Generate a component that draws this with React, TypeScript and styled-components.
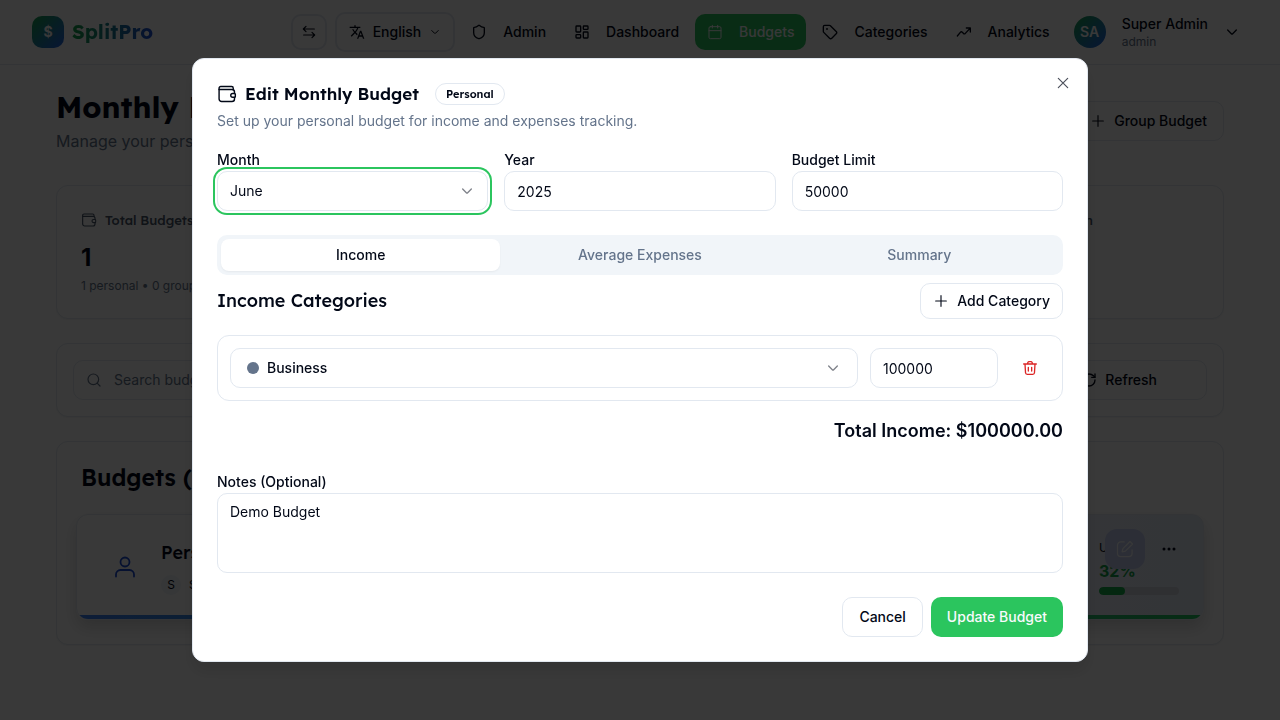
import React from "react";
import styled, { createGlobalStyle, css } from "styled-components";
import { Calendar, LayoutDashboard, RefreshCw, Search, Shield, Tag } from "lucide-react";
import { MdTranslate } from "react-icons/md";

const ink = "#020817";
const muted = "#64748b";
const line = "#e2e8f0";
const green = "#2bc55e";
const body = `Inter, "Liberation Sans", sans-serif`;
const display = `Lexend, Inter, "Liberation Sans", sans-serif`;

const GlobalStyle = createGlobalStyle`
  *, *::before, *::after { box-sizing: border-box; }
  body {
    margin: 0;
    background: #fff;
    color: ${ink};
    font-family: ${body};
    font-size: 14px;
    line-height: 20px;
    overflow: hidden;
  }
  h1, h2, h3, p { margin: 0; }
  button, input, select, textarea { font: inherit; color: inherit; }
  button { cursor: pointer; }
  a { color: inherit; text-decoration: none; }
  svg { display: block; flex: none; }
`;

/* ---------- icons ---------- */

const Icon = ({ size = 16, children, width = 1.5 }: { size?: number; width?: number; children: React.ReactNode }) => (
  <svg
    width={size}
    height={size}
    viewBox="0 0 24 24"
    fill="none"
    stroke="currentColor"
    strokeWidth={width}
    strokeLinecap="round"
    strokeLinejoin="round"
    aria-hidden="true"
  >
    {children}
  </svg>
);

const WalletIcon = ({ size }: { size: number }) => (
  <Icon size={size} width={1.7}>
    <path d="M2.5 6.5V5a2 2 0 0 1 2-2h13a2 2 0 0 1 2 2v1.8" />
    <path d="M2.5 6.5H18a3 3 0 0 1 3 3v1.8M21 16v2a3 3 0 0 1-3 3H5.5a3 3 0 0 1-3-3V6.5" />
    <path d="M21 11.3h-2.2a2.3 2.3 0 0 0 0 4.6H21c.6 0 1-.4 1-1v-2.6c0-.6-.4-1-1-1z" />
  </Icon>
);

const SwapIcon = () => (
  <Icon width={1.8}>
    <path d="M20 7.5H3.5M7.5 3.5l-4 4 4 4M4 16.5h16.5M16.5 12.5l4 4-4 4" />
  </Icon>
);

const ChevronIcon = ({ size = 16 }: { size?: number }) => (
  <Icon size={size} width={2}>
    <path d="M18.500 9l-5.500 5.500q-1 1-2 0L5.500 9" />
  </Icon>
);

const PlusIcon = () => (
  <Icon width={1.7}>
    <path d="M12 4v16M4 12h16" />
  </Icon>
);

const CloseIcon = () => (
  <Icon width={1.8}>
    <path d="M5 5l14 14M19 5L5 19" />
  </Icon>
);

const TrendIcon = () => (
  <Icon width={2}>
    <path d="M2 18l4.500-5.500c1-1.200 2-1.200 3 0l1.500 1.500c1 1.200 2 1.200 3 0L21 6.500M15.500 6H21.500v6" />
  </Icon>
);

const TrashIcon = () => (
  <Icon width={2}>
    <path d="M4.500 6l.8 13.200A2.500 2.500 0 0 0 7.800 21.500h8.400a2.500 2.500 0 0 0 2.500-2.300L19.500 6M2.500 6h19M8 6l1-2.500c.3-.7.8-1 1.500-1h3c.7 0 1.200.3 1.500 1L16 6M9.500 11v5.500M14.500 11v5.500" />
  </Icon>
);

const UserIcon = () => (
  <Icon size={24} width={1.8}>
    <circle cx="12" cy="7" r="4.500" />
    <path d="M3 21.500v-2a4.500 4.500 0 0 1 4.500-4.500h9a4.500 4.500 0 0 1 4.500 4.500v2" />
  </Icon>
);

const EditIcon = () => (
  <Icon size={20}>
    <path d="M11 3.500H7a4 4 0 0 0-4 4V17a4 4 0 0 0 4 4h9.500a4 4 0 0 0 4-4v-4" />
    <path d="M18 3l3 3-8.500 8.500L8.500 15.500l1-4z" />
  </Icon>
);

/* ---------- page header ---------- */

const Header = styled.header`
  display: flex;
  align-items: center;
  justify-content: space-between;
  height: 65px;
  padding: 0 32px;
  border-bottom: 1px solid ${line};
`;

const Brand = styled.a`
  display: flex;
  align-items: center;
  gap: 8px;
`;

const BrandMark = styled.span`
  display: grid;
  place-items: center;
  width: 32px;
  height: 32px;
  border-radius: 10px;
  background: linear-gradient(135deg, #16a34a, #2563eb);
  color: #fff;
  font-weight: 700;
`;

const BrandName = styled.span`
  font: 700 20px/28px ${display};
  background: linear-gradient(90deg, #16a34a, #1d4ed8);
  background-clip: text;
  color: transparent;
`;

const Nav = styled.nav`
  display: flex;
  align-items: center;
  gap: 4px;
`;

const SwapButton = styled.button`
  display: grid;
  place-items: center;
  width: 36px;
  height: 36px;
  margin-right: 4px;
  padding: 0;
  border: 2px solid ${line};
  border-radius: 10px;
  background: #fff;
`;

const LanguageButton = styled.button`
  display: flex;
  align-items: center;
  gap: 8px;
  height: 40px;
  padding: 0 12px;
  border: 2px solid ${line};
  border-radius: 10px;
  background: #fff;
  font-weight: 500;
`;

const NavLink = styled.a<{ $active?: boolean }>`
  display: flex;
  align-items: center;
  gap: 16px;
  height: 36px;
  padding: 0 12px;
  border-radius: 10px;
  font-weight: 500;
  ${(p) => p.$active && css`background: ${green}; color: #f8fafc;`}
`;

const Account = styled.button`
  display: flex;
  align-items: center;
  gap: 16px;
  padding: 0 8px;
  border: 0;
  background: none;
  text-align: left;
`;

const Avatar = styled.span`
  display: grid;
  place-items: center;
  width: 32px;
  height: 32px;
  border-radius: 50%;
  background: linear-gradient(135deg, #16a34a, #2563eb);
  color: #fff;
  font-weight: 600;
`;

const AccountText = styled.span`
  display: grid;
  font-weight: 500;
`;

const Role = styled.span`
  color: ${muted};
  font-size: 12px;
  font-weight: 400;
  line-height: 16px;
`;

/* ---------- page ---------- */

const Main = styled.main`
  display: grid;
  gap: 24px;
  padding: 24px 56px;
`;

const PageHead = styled.div`
  display: flex;
  align-items: center;
  justify-content: space-between;
  height: 64px;
  margin-bottom: 8px;
`;

const PageTitle = styled.h1`
  font: 700 30px/36px ${display};
`;

const PageText = styled.p`
  color: ${muted};
  font-size: 16px;
  line-height: 24px;
  margin-top: 4px;
`;

const Button = styled.button<{ $primary?: boolean; $small?: boolean }>`
  display: inline-flex;
  align-items: center;
  justify-content: center;
  gap: 8px;
  height: ${(p) => (p.$small ? 36 : 40)}px;
  padding: 0 ${(p) => (p.$small ? 12 : 16)}px;
  border: ${(p) => (p.$primary ? "0" : `1px solid ${line}`)};
  border-radius: 10px;
  background: ${(p) => (p.$primary ? green : "#fff")};
  color: ${(p) => (p.$primary ? "#f8fafc" : ink)};
  font-weight: 500;
`;

const Card = styled.section`
  border: 1px solid ${line};
  border-radius: 12px;
  background: #fff;
  box-shadow: 0 1px 2px rgba(0, 0, 0, 0.05);
`;

const Stats = styled.div`
  display: grid;
  grid-template-columns: repeat(4, 1fr);
  gap: 24px;
`;

const Stat = styled(Card)`
  height: 134px;
  padding: 24px;
`;

const StatTitle = styled.h3`
  display: flex;
  align-items: center;
  gap: 8px;
  color: #475569;
  font: 500 13px/20px ${display};
`;

const StatValue = styled.p`
  margin-top: 12px;
  font-size: 24px;
  font-weight: 700;
  line-height: 32px;
`;

const StatNote = styled.p`
  margin-top: 4px;
  color: ${muted};
  font-size: 12px;
  line-height: 16px;
`;

const Filters = styled(Card)`
  display: grid;
  grid-template-columns: repeat(6, 1fr);
  gap: 16px;
  padding: 16px;
`;

const SearchBox = styled.label`
  grid-column: span 5;
  display: flex;
  align-items: center;
  gap: 12px;
  height: 40px;
  padding: 0 12px;
  border: 1px solid ${line};
  border-radius: 10px;
  color: ${muted};
`;

const SearchInput = styled.input`
  flex: 1;
  padding: 0;
  border: 0;
  background: none;
  outline: 0;
  &::placeholder { color: ${muted}; opacity: 1; }
`;

const BudgetList = styled(Card)`
  padding: 20px 19px 24px;
`;

const ListTitle = styled.h2`
  padding-left: 5px;
  font: 600 23px/32px ${display};
`;

const RowShadow = styled.div`
  margin-top: 20px;
  border-radius: 12px;
  box-shadow: 0 8px 16px rgba(0, 0, 0, 0.15);
`;

const BudgetRow = styled.article`
  position: relative;
  display: flex;
  align-items: center;
  justify-content: space-between;
  height: 106px;
  padding: 0 24px 0 36px;
  border: 1px solid ${line};
  border-radius: 12px;
  overflow: hidden;
  background: linear-gradient(90deg, #fff, #e4ebf7);
  &::after {
    content: "";
    position: absolute;
    inset: auto 0 0;
    height: 4px;
    background: linear-gradient(90deg, #3b82f6, #22c55e);
  }
`;

const Owner = styled.div`
  display: flex;
  align-items: center;
  gap: 24px;
  color: #1d4ed8;
`;

const OwnerText = styled.div`
  display: grid;
  gap: 8px;
  color: ${ink};
`;

const OwnerName = styled.h3`
  font: 500 18px/28px ${display};
`;

const Member = styled.p`
  display: flex;
  align-items: center;
  gap: 8px;
  font-size: 12px;
`;

const MemberMark = styled.span`
  display: grid;
  place-items: center;
  width: 20px;
  height: 20px;
  border-radius: 50%;
  background: #f1f5f9;
`;

const Usage = styled.div`
  display: grid;
  width: 80px;
  padding-bottom: 1px;
  font-size: 12px;
`;

const Percent = styled.strong`
  color: #16a34a;
  font-size: 16px;
  line-height: 26px;
`;

const Meter = styled.span`
  height: 8px;
  margin-top: 3px;
  border-radius: 4px;
  background: #d3d7de;
  overflow: hidden;
`;

const MeterFill = styled.span`
  display: block;
  width: 33%;
  height: 100%;
  border-radius: 4px;
  background: #16b04a;
`;

const RowActions = styled.div`
  position: absolute;
  top: 14px;
  right: 14px;
  display: flex;
  gap: 4px;
`;

const RowAction = styled.button<{ $tinted?: boolean }>`
  display: grid;
  place-items: center;
  width: 40px;
  height: 40px;
  padding: 0;
  border: 0;
  border-radius: 12px;
  background: ${(p) => (p.$tinted ? "#c3cdf0" : "none")};
  color: ${(p) => (p.$tinted ? "#f8fafc" : ink)};
`;

/* ---------- dialog ---------- */

const Overlay = styled.div`
  position: fixed;
  inset: 0;
  display: grid;
  place-items: center;
  background: rgba(0, 0, 0, 0.775);
`;

const Dialog = styled.div`
  position: relative;
  width: 70%;
  min-width: 640px;
  padding: 24px;
  border: 1px solid ${line};
  border-radius: 12px;
  background: #fff;
  box-shadow: 0 10px 15px rgba(0, 0, 0, 0.1);
`;

const Close = styled.button`
  position: absolute;
  top: 16px;
  right: 16px;
  padding: 0;
  border: 0;
  background: none;
  opacity: 0.7;
`;

const DialogTitle = styled.h2`
  display: flex;
  align-items: center;
  gap: 8px;
  height: 22px;
  font: 600 17px/22px ${display};
`;

const Badge = styled.span`
  margin-left: 8px;
  padding: 0 10px;
  border: 1px solid ${line};
  border-radius: 11px;
  font-size: 11px;
  line-height: 20px;
`;

const Description = styled.p`
  margin: 6px 0 16px;
  color: ${muted};
`;

const Fields = styled.div`
  display: grid;
  grid-template-columns: repeat(3, 1fr);
  gap: 16px;
  margin-bottom: 24px;
`;

const Label = styled.label`
  display: block;
  padding-top: 2px;
  font-weight: 500;
  line-height: 22px;
`;

const control = css`
  display: block;
  width: 100%;
  height: 40px;
  padding: 0 12px;
  border: 1px solid ${line};
  border-radius: 10px;
  background: #fff;
  outline: 0;
`;

const Input = styled.input`
  ${control}
`;

const SelectWrap = styled.div`
  position: relative;
  flex: 1;
`;

const Select = styled.select<{ $ring?: boolean; $dotted?: boolean }>`
  ${control}
  appearance: none;
  ${(p) => p.$ring && css`box-shadow: 0 0 0 2px #fff, 0 0 0 4px ${green};`}
  ${(p) => p.$dotted && css`padding-left: 36px; font-weight: 500;`}
`;

const Chevron = styled.span<{ $inset?: boolean }>`
  position: absolute;
  top: 12px;
  right: ${(p) => (p.$inset ? 17 : 13)}px;
  opacity: 0.5;
  pointer-events: none;
`;

const Dot = styled.span`
  position: absolute;
  top: 14px;
  left: 17px;
  width: 12px;
  height: 12px;
  border-radius: 50%;
  background: ${muted};
`;

const Tabs = styled.div`
  display: grid;
  grid-template-columns: repeat(3, 1fr);
  padding: 4px;
  border-radius: 10px;
  background: #f1f5f9;
`;

const Tab = styled.button<{ $active?: boolean }>`
  height: 32px;
  border: 0;
  border-radius: 8px;
  background: ${(p) => (p.$active ? "#fff" : "none")};
  box-shadow: ${(p) => (p.$active ? "0 1px 2px rgba(0, 0, 0, 0.05)" : "none")};
  color: ${(p) => (p.$active ? ink : muted)};
  font-weight: 500;
`;

const SectionHead = styled.div`
  display: flex;
  align-items: center;
  justify-content: space-between;
  margin: 8px 0 16px;
`;

const SectionTitle = styled.h3`
  font: 500 18px/28px ${display};
`;

const CategoryRow = styled.div`
  display: flex;
  gap: 12px;
  padding: 12px;
  border: 1px solid ${line};
  border-radius: 12px;
`;

const Amount = styled(Input)`
  width: 128px;
`;

const Delete = styled.button`
  display: grid;
  place-items: center;
  width: 40px;
  height: 40px;
  padding: 0;
  border: 0;
  background: none;
  color: #dc2626;
`;

const Total = styled.p`
  margin: 16px 0 24px;
  font-size: 18px;
  font-weight: 600;
  line-height: 28px;
  text-align: right;
`;

const Notes = styled.textarea`
  ${control}
  height: 80px;
  padding: 8px 12px;
  resize: none;
`;

const Footer = styled.div`
  display: flex;
  justify-content: flex-end;
  gap: 8px;
  margin-top: 24px;
`;

export default function App() {
  return (
    <>
      <GlobalStyle />
      <Header>
        <Brand href="#">
          <BrandMark>$</BrandMark>
          <BrandName>SplitPro</BrandName>
        </Brand>
        <Nav>
          <SwapButton aria-label="Switch direction"><SwapIcon /></SwapButton>
          <LanguageButton>
            <MdTranslate size={16} />
            English
            <ChevronIcon size={12} />
          </LanguageButton>
          <NavLink href="#"><Shield size={16} strokeWidth={2} />Admin</NavLink>
          <NavLink href="#"><LayoutDashboard size={16} strokeWidth={2} />Dashboard</NavLink>
          <NavLink href="#" $active><Calendar size={16} strokeWidth={1.5} />Budgets</NavLink>
          <NavLink href="#"><Tag size={16} strokeWidth={2} />Categories</NavLink>
          <NavLink href="#"><TrendIcon />Analytics</NavLink>
          <Account>
            <Avatar>SA</Avatar>
            <AccountText>Super Admin<Role>admin</Role></AccountText>
            <ChevronIcon />
          </Account>
        </Nav>
      </Header>

      <Main>
        <PageHead>
          <div>
            <PageTitle>Monthly Budgets</PageTitle>
            <PageText>Manage your personal and group budgets</PageText>
          </div>
          <Button><PlusIcon />Group Budget</Button>
        </PageHead>

        <Stats>
          <Stat>
            <StatTitle><WalletIcon size={16} />Total Budgets</StatTitle>
            <StatValue>1</StatValue>
            <StatNote>1 personal • 0 group</StatNote>
          </Stat>
          <Stat />
          <Stat />
          <Stat>
            <StatTitle><WalletIcon size={16} />Avg Utilization</StatTitle>
          </Stat>
        </Stats>

        <Filters>
          <SearchBox>
            <Search size={16} strokeWidth={1.8} />
            <SearchInput placeholder="Search budgets..." aria-label="Search budgets" />
          </SearchBox>
          <Button><RefreshCw size={16} strokeWidth={2} />Refresh</Button>
        </Filters>

        <BudgetList>
          <ListTitle>Budgets (1)</ListTitle>
          <RowShadow>
            <BudgetRow>
              <Owner>
                <UserIcon />
                <OwnerText>
                  <OwnerName>Personal Budget</OwnerName>
                  <Member><MemberMark>S</MemberMark>Super Admin</Member>
                </OwnerText>
              </Owner>
              <Usage>
                <span>Used</span>
                <Percent>32%</Percent>
                <Meter><MeterFill /></Meter>
              </Usage>
              <RowActions>
                <RowAction $tinted aria-label="Edit"><EditIcon /></RowAction>
                <RowAction aria-label="More">
                  <svg width="16" height="16" viewBox="0 0 16 16" fill="currentColor" aria-hidden="true">
                    <circle cx="3" cy="8" r="1.5" />
                    <circle cx="8" cy="8" r="1.5" />
                    <circle cx="13" cy="8" r="1.5" />
                  </svg>
                </RowAction>
              </RowActions>
            </BudgetRow>
          </RowShadow>
        </BudgetList>
      </Main>

      <Overlay>
        <Dialog role="dialog" aria-modal="true" aria-labelledby="dialog-title">
          <Close aria-label="Close"><CloseIcon /></Close>
          <DialogTitle id="dialog-title">
            <WalletIcon size={20} />
            Edit Monthly Budget
            <Badge>Personal</Badge>
          </DialogTitle>
          <Description>Set up your personal budget for income and expenses tracking.</Description>

          <Fields>
            <div>
              <Label htmlFor="month">Month</Label>
              <SelectWrap>
                <Select id="month" $ring defaultValue="June"><option>June</option></Select>
                <Chevron><ChevronIcon /></Chevron>
              </SelectWrap>
            </div>
            <div>
              <Label htmlFor="year">Year</Label>
              <Input id="year" defaultValue="2025" />
            </div>
            <div>
              <Label htmlFor="limit">Budget Limit</Label>
              <Input id="limit" defaultValue="50000" />
            </div>
          </Fields>

          <Tabs role="tablist">
            <Tab role="tab" aria-selected="true" $active>Income</Tab>
            <Tab role="tab" aria-selected="false">Average Expenses</Tab>
            <Tab role="tab" aria-selected="false">Summary</Tab>
          </Tabs>

          <SectionHead>
            <SectionTitle>Income Categories</SectionTitle>
            <Button $small><PlusIcon />Add Category</Button>
          </SectionHead>

          <CategoryRow>
            <SelectWrap>
              <Select $dotted aria-label="Category" defaultValue="Business"><option>Business</option></Select>
              <Dot />
              <Chevron $inset><ChevronIcon /></Chevron>
            </SelectWrap>
            <Amount aria-label="Amount" defaultValue="100000" />
            <Delete aria-label="Delete category"><TrashIcon /></Delete>
          </CategoryRow>
          <Total>Total Income: $100000.00</Total>

          <Label htmlFor="notes">Notes (Optional)</Label>
          <Notes id="notes" defaultValue="Demo Budget" />

          <Footer>
            <Button>Cancel</Button>
            <Button $primary>Update Budget</Button>
          </Footer>
        </Dialog>
      </Overlay>
    </>
  );
}
